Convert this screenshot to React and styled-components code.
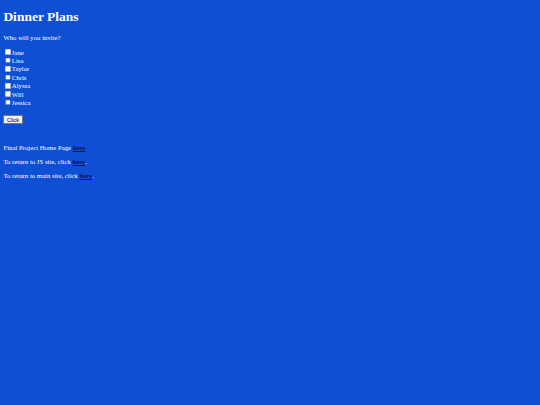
import React from "react";
import styled, { createGlobalStyle } from "styled-components";

const GlobalStyle = createGlobalStyle`
  html, body {
    margin: 0;
    background: #0e4fd3;
    min-height: 100%;
  }
  body {
    font-family: "Liberation Serif", "Times New Roman", serif;
    color: #ffffff;
  }
`;

// the whole page is a 1280px-wide layout shown at 540px
const Page = styled.div`
  zoom: 0.421875;
  margin: 8px;
  font-size: 16px;
`;

const Title = styled.h1`
  font-size: 32px;
  font-weight: bold;
  margin: 21.44px 0;
`;

const Text = styled.p`
  margin: 16px 0;
`;

const GuestList = styled.form`
  display: flex;
  flex-direction: column;
  align-items: flex-start;
`;

const Guest = styled.label`
  display: flex;
  align-items: center;
  height: 20px;

  input {
    width: 13px;
    height: 13px;
    margin: 3px 3px 3px 4px;
  }
`;

const Button = styled.button`
  margin-top: 20px;
  font-family: Arial, "Liberation Sans", sans-serif;
  font-size: 13.33px;
  padding: 1px 6px;
  background: #efefef;
  color: #000;
  border: 1px solid #767676;
  border-radius: 2px;
`;

const Links = styled.div`
  margin-top: 48px;
`;

const Link = styled.a`
  color: #0a1650;
  font-weight: bold;
  text-decoration: underline;
`;

const guests = ["Jane", "Lisa", "Taylor", "Chris", "Alyssa", "Will", "Jessica"];

export default function App() {
  return (
    <>
      <GlobalStyle />
      <Page>
        <Title>Dinner Plans</Title>
        <Text>Who will you invite?</Text>
        <GuestList onSubmit={(e) => e.preventDefault()}>
          {guests.map((name) => (
            <Guest key={name}>
              <input type="checkbox" />
              {name}
            </Guest>
          ))}
          <Button type="button">Click</Button>
        </GuestList>
        <Links>
          <Text>
            Final Project Home Page <Link href="#">here</Link>
          </Text>
          <Text>
            To return to JS site, click <Link href="#">here</Link>.
          </Text>
          <Text>
            To return to main site, click <Link href="#">here</Link>.
          </Text>
        </Links>
      </Page>
    </>
  );
}
